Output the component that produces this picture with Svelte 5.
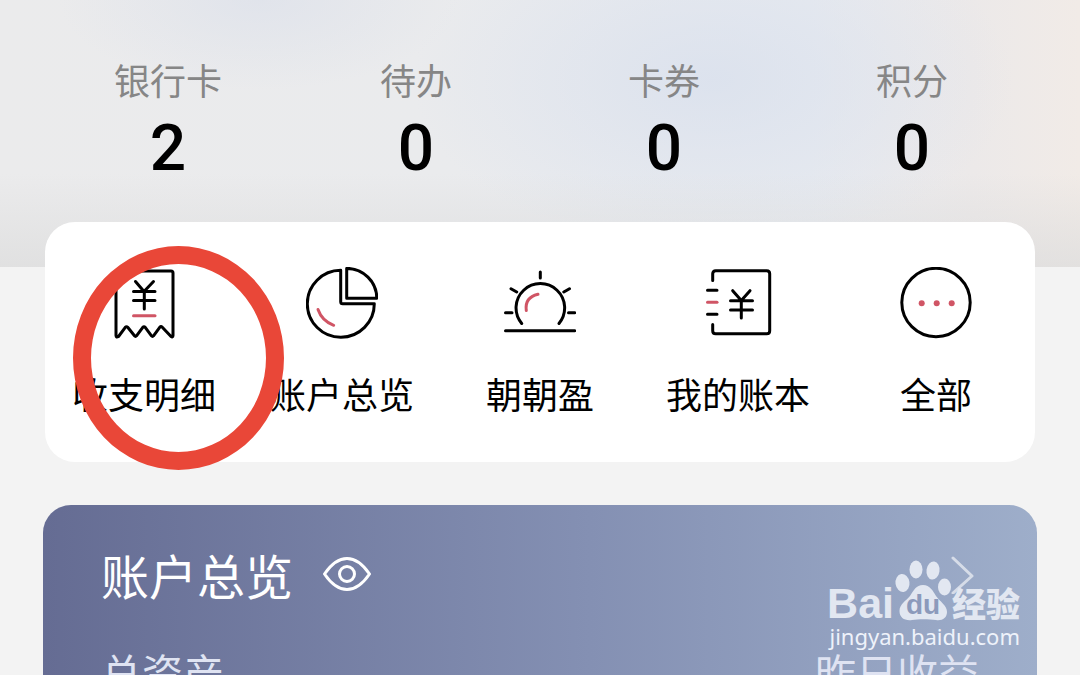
<script>
	const stats = [
		{ label: '银行卡', value: 2 },
		{ label: '待办', value: 0 },
		{ label: '卡券', value: 0 },
		{ label: '积分', value: 0 }
	];

	const actions = [
		{ label: '收支明细', icon: 'receipt', marked: true },
		{ label: '账户总览', icon: 'pie' },
		{ label: '朝朝盈', icon: 'sunrise' },
		{ label: '我的账本', icon: 'ledger' },
		{ label: '全部', icon: 'more' }
	];
</script>

<main class="page">
	<section class="hero">
		{#each stats as stat (stat.label)}
			<a class="stat" href="#stat">
				<span class="stat__label">{stat.label}</span>
				<span class="stat__value">{stat.value}</span>
			</a>
		{/each}
	</section>

	<nav class="actions">
		{#each actions as action (action.label)}
			<button class="action" type="button">
				<svg class="action__icon" viewBox="0 0 72 72" aria-hidden="true">
					{#if action.icon === 'receipt'}
						<path d="M10 4H63Q65 4 65 6V68.500Q65 71 62.800 69.300L54.300 60.300Q53 59 51.700 60.300L45.500 68.800Q44.500 70 43.500 68.800L37.200 60.300Q36 59 34.800 60.300L28.500 68.800Q27.500 70 26.500 68.800L19.700 60.300Q18.500 59 17.300 60.300L10.500 69.500Q8 71 8 68.500V6Q8 4 10 4Z" />
						<path d="M27.500 14.500L36 24.500L45.500 14.500M25.500 24.500H47M25.500 33.500H47M36.300 24.500V42" />
						<path class="accent" d="M25.500 48.700H47" />
					{:else if action.icon === 'pie'}
						<path d="M34.700 3.300V34.700Q34.700 36.700 36.700 36.700H68.300A33.500 33.500 0 1 1 34.700 3.300Z" />
						<path d="M40.700 1.400V31.300H70.800A30 30 0 0 0 40.700 1.400Z" />
						<path class="accent" d="M12 42.500Q16 54 27.700 58.300" />
					{:else if action.icon === 'sunrise'}
						<path d="M17.700 56.500A24.300 24.300 0 1 1 55 56.500M1.500 63.700H70.800" />
						<path d="M36.300 5V11M7 21.700L12.700 25M65.500 21.700L59.800 25M1.500 45.700H8M64.500 45.700H70.800" />
						<path class="accent" d="M22.300 43.500Q20.500 30.500 34 27.300" />
					{:else if action.icon === 'ledger'}
						<path d="M10.700 13.500V6.700Q10.700 3.700 13.700 3.700H64.700Q67.700 3.700 67.700 6.700V63.700Q67.700 66.700 64.700 66.700H13.700Q10.700 66.700 10.700 63.700V57.500" />
						<path d="M5.500 23.300H15M5.500 47.300H15" />
						<path d="M30.700 23.700L39.300 33.500L48 23.700M28.500 33.700H50.500M28.500 43H50.500M39.300 33.500V51" />
						<path class="accent" d="M5.500 35.300H15" />
					{:else}
						<circle cx="36" cy="35.500" r="34.200" />
						<g class="dots">
							<circle cx="21.700" cy="36.200" r="3" />
							<circle cx="36.700" cy="36.200" r="3" />
							<circle cx="51.700" cy="36.200" r="3" />
						</g>
					{/if}
				</svg>
				<span class="action__label">{action.label}</span>
				{#if action.marked}
					<span class="ring"></span>
				{/if}
			</button>
		{/each}
	</nav>

	<section class="account">
		<header class="account__head">
			<h2 class="account__title">账户总览</h2>
			<button class="account__eye" type="button" aria-label="显示金额">
				<svg viewBox="0 0 48 34" aria-hidden="true">
					<path d="M1.500 17C9 6 16 1.500 24 1.500S39 6 46.500 17C39 28 32 32.500 24 32.500S9 28 1.500 17Z" />
					<circle cx="24" cy="17" r="7.500" />
				</svg>
			</button>
			<a class="account__more" href="#account" aria-label="账户总览">
				<svg viewBox="0 0 24 40" aria-hidden="true">
					<path d="M2 4L21 22L2 39" />
				</svg>
			</a>
		</header>
		<div class="account__row">
			<span>总资产</span>
			<span>昨日收益</span>
		</div>

		<div class="watermark">
			<div class="watermark__logo">
				<span class="watermark__latin">Bai</span>
				<svg viewBox="0 0 58 62" aria-hidden="true">
					<ellipse cx="8.500" cy="23" rx="7" ry="9" transform="rotate(-8 8.500 23)" />
					<ellipse cx="22" cy="9.500" rx="6.500" ry="9" />
					<ellipse cx="39" cy="10.500" rx="6.500" ry="9" transform="rotate(8 39 10.500)" />
					<ellipse cx="50.500" cy="27" rx="6.500" ry="8.500" />
					<path d="M29 25C36 25 39 31 42 36C46 42 53 45 53 52C53 58 48 61 42 60C35 59 24 59 18 60C11 61 5.500 58 5.500 51C5.500 44 12 41 16 36C20 30 22 25 29 25Z" />
					<text x="29" y="54" text-anchor="middle">du</text>
				</svg>
				<span class="watermark__han">经验</span>
			</div>
			<div class="watermark__url">jingyan.baidu.com</div>
		</div>
	</section>
</main>

<style>
	:global(body) {
		margin: 0;
		background: #f3f3f3;
	}

	.page {
		height: 100vh;
		overflow: hidden;
		background: #f3f3f3;
		color: #000;
		font-family: 'Noto Sans CJK SC', sans-serif;
	}

	a {
		color: inherit;
		text-decoration: none;
	}

	button {
		padding: 0;
		border: 0;
		background: none;
		color: inherit;
		font: inherit;
		cursor: pointer;
	}

	svg {
		display: block;
		fill: none;
		stroke: currentColor;
		stroke-linecap: round;
		stroke-linejoin: round;
	}

	.hero {
		display: grid;
		grid-template-columns: repeat(4, 1fr);
		padding: 55px 44px 85px;
		background:
			linear-gradient(to bottom, transparent 65%, rgba(220, 220, 220, 0.7)),
			radial-gradient(ellipse 300px 170px at 66% 30%, rgba(217, 224, 237, 0.8), transparent),
			radial-gradient(ellipse 200px 90px at 24% 0%, rgba(218, 223, 234, 0.6), transparent),
			linear-gradient(to right, #ebebec, #eaebed 40%, #e8ebf0 75%, #ece9e9 90%, #f1ebe7);
	}

	.stat {
		display: flex;
		flex-direction: column;
		align-items: center;
		gap: 13px;
	}

	.stat__label {
		color: #868686;
		font-size: 36px;
		line-height: 48px;
	}

	.stat__value {
		font-family: Roboto, sans-serif;
		font-size: 64px;
		font-weight: 500;
		line-height: 66px;
	}

	.actions {
		position: relative;
		z-index: 1;
		display: grid;
		grid-template-columns: repeat(5, 1fr);
		margin: -45px 45px 0;
		padding: 45px 0;
		border-radius: 30px;
		background: #fff;
	}

	.action {
		position: relative;
		display: flex;
		flex-direction: column;
		align-items: center;
		gap: 30px;
	}

	.action:first-child {
		z-index: 1;
	}

	.action__icon {
		width: 72px;
		height: 72px;
		stroke-width: 3;
	}

	.action__label {
		font-size: 36px;
		line-height: 48px;
		white-space: nowrap;
	}

	.accent {
		stroke: #d05565;
	}

	.dots {
		fill: #d05565;
		stroke: none;
	}

	/* hand-drawn marker around the first shortcut */
	.ring {
		position: absolute;
		top: -21px;
		left: 28px;
		box-sizing: border-box;
		width: 211px;
		height: 224px;
		border: 18px solid #e94738;
		border-radius: 50%;
	}

	.account {
		position: relative;
		margin: 43px 43px 0;
		padding: 39px 58px 41px;
		border-radius: 28px;
		background: linear-gradient(to right, #656c93, #8490b3 55%, #9eaeca);
		color: #fff;
	}

	.account__head {
		display: flex;
		align-items: center;
	}

	.account__title {
		margin: 0 30px 0 0;
		font-size: 48px;
		font-weight: 400;
		line-height: 60px;
	}

	.account__eye svg {
		width: 48px;
		height: 34px;
		stroke-width: 3;
	}

	.account__more {
		margin: 0 4px 0 auto;
		opacity: 0.6;
	}

	.account__more svg {
		width: 24px;
		height: 40px;
		stroke-width: 3;
	}

	.account__row {
		display: flex;
		justify-content: space-between;
		margin-top: 43px;
		color: #dfe3f2;
		font-size: 41px;
		line-height: 48px;
	}

	.watermark {
		position: absolute;
		top: 54px;
		right: 17px;
		color: #e2e7f1;
	}

	.watermark__logo {
		display: flex;
		align-items: flex-end;
		height: 63px;
	}

	.watermark__logo svg {
		width: 58px;
		height: 62px;
		fill: currentColor;
		stroke: none;
	}

	.watermark__logo text {
		fill: #8c9abb;
		font-family: 'Liberation Sans', sans-serif;
		font-size: 28px;
		font-weight: 700;
	}

	.watermark__latin {
		font-family: 'Liberation Sans', sans-serif;
		font-size: 43px;
		font-weight: 700;
		line-height: 38px;
	}

	.watermark__han {
		font-size: 34px;
		font-weight: 900;
		line-height: 38px;
	}

	.watermark__url {
		color: #eef2fa;
		font-family: 'Noto Sans', sans-serif;
		font-size: 22px;
		line-height: 28px;
		text-align: right;
	}
</style>
